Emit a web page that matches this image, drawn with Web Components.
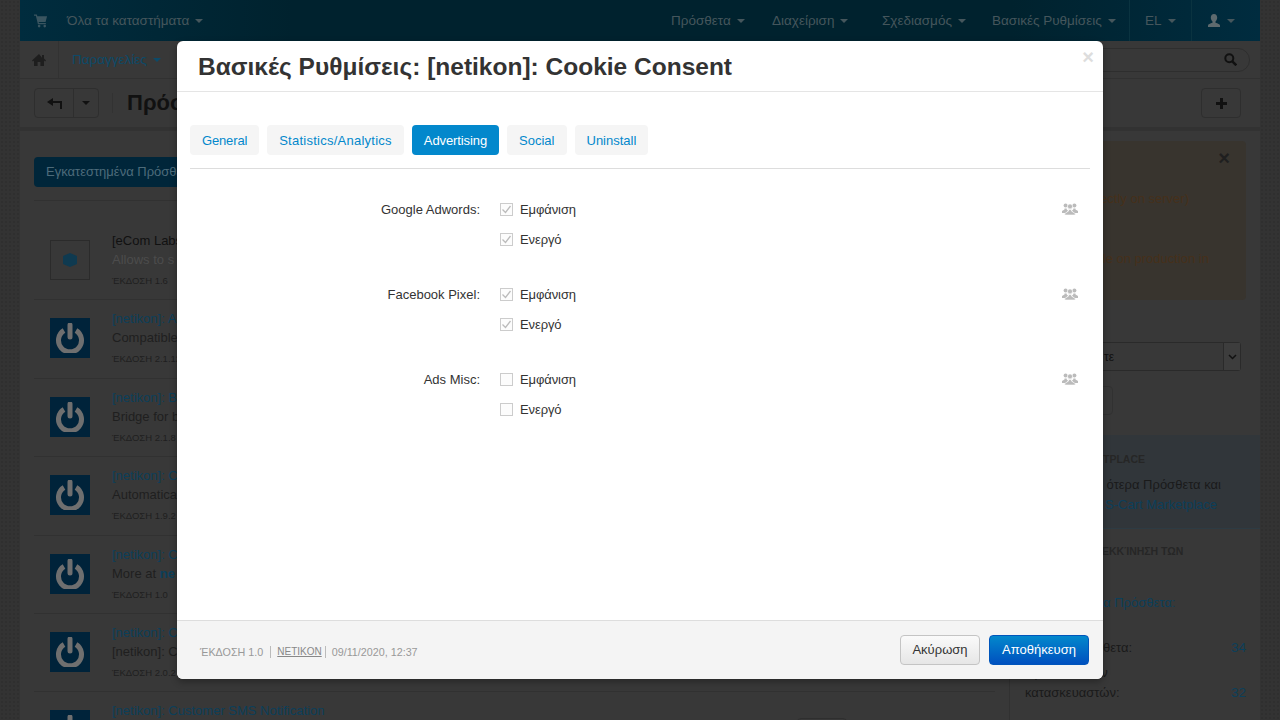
<!DOCTYPE html>
<html lang="el">
<head>
<meta charset="utf-8">
<title>Πρόσθετα</title>
<style>
  html, body { margin: 0; height: 720px; overflow: hidden; }
  body {
    font: 13px/18px "Liberation Sans", Arial, sans-serif;
    color: #1c1c1c;
    background-color: #333;
    background-image: radial-gradient(#2f2f2f 1px, transparent 1px);
    background-size: 4px 4px;
    position: relative;
  }
  .shell { width: 1240px; height: 720px; margin: 0 auto; background: #383838; display: flex; flex-direction: column; overflow: hidden; }
  .content { display: flex; flex: 1; min-height: 0; }
</style>
</head>
<body>
<div class="shell">
  <top-bar></top-bar>
  <sub-nav></sub-nav>
  <page-toolbar></page-toolbar>
  <div class="content">
    <addon-list>
      <addon-row title-text="[eCom Labs" kind="box" version="ΈΚΔΟΣΗ 1.6" dark>Allows to s</addon-row>
      <addon-row title-text="[netikon]: A" version="ΈΚΔΟΣΗ 2.1.12">Compatible</addon-row>
      <addon-row title-text="[netikon]: B" version="ΈΚΔΟΣΗ 2.1.8">Bridge for b</addon-row>
      <addon-row title-text="[netikon]: C" version="ΈΚΔΟΣΗ 1.9.2">Automatica</addon-row>
      <addon-row title-text="[netikon]: C" version="ΈΚΔΟΣΗ 1.0">More at <b>ne</b></addon-row>
      <addon-row title-text="[netikon]: C" version="ΈΚΔΟΣΗ 2.0.2">[netikon]: C</addon-row>
      <addon-row title-text="[netikon]: Customer SMS Notification" version="" action></addon-row>
    </addon-list>
    <side-bar></side-bar>
  </div>
</div>

<settings-modal heading="Βασικές Ρυθμίσεις: [netikon]: Cookie Consent">
  <tab-strip slot="tabs">
    <tab-pill style="letter-spacing:-.15px">General</tab-pill>
    <tab-pill style="letter-spacing:.25px">Statistics/Analytics</tab-pill>
    <tab-pill active style="letter-spacing:-.1px">Advertising</tab-pill>
    <tab-pill>Social</tab-pill>
    <tab-pill>Uninstall</tab-pill>
  </tab-strip>
  <setting-group label="Google Adwords:" checked></setting-group>
  <setting-group label="Facebook Pixel:" checked></setting-group>
  <setting-group label="Ads Misc:"></setting-group>
</settings-modal>

<template id="nav-style">
  <style>
    .item { display: flex; align-items: center; white-space: nowrap; box-sizing: border-box; }
    .caret { width: 0; height: 0; border: 4px solid transparent; border-top-color: currentColor; border-bottom: 0; margin-left: 6px; }
    svg { display: block; }
  </style>
</template>

<script>
const navStyle = document.getElementById('nav-style').innerHTML

const ICONS = {
  cart: '<path d="M0 1h3l.6 2H14l-1.6 6H5l.3 1.200h7.400v1.300H4.200L2 2.400H0z"/><circle cx="5.500" cy="13.500" r="1.400"/><circle cx="11.500" cy="13.500" r="1.400"/>',
  home: '<path d="M7 1 0 7.400l.9 1L2 7.500V13h3.600V9h2.800v4H12V7.500l1.100.9.9-1-2-1.800V2h-2v2.800z"/>',
  user: '<path d="M7 0c2 0 3.200 1.500 3.200 3.600 0 1.700-.8 3.200-1.700 4v1.200c2.200.6 4.500 1.500 4.500 2.700V13H1v-1.500c0-1.200 2.300-2.100 4.500-2.700V7.600c-.9-.8-1.700-2.300-1.700-4C3.800 1.500 5 0 7 0z"/>',
}

class TopBar extends HTMLElement {
  connectedCallback() {
    const items = [['Πρόσθετα', 101], ['Διαχείριση', 110], ['Σχεδιασμός', 110], ['Βασικές Ρυθμίσεις', 153]]
    this.attachShadow({ mode: 'open' }).innerHTML = `${navStyle}
      <style>
        :host { display: flex; align-items: center; height: 41px; flex: none; font-size: 13.500px; color: #45565c;
          background: linear-gradient(90deg, #002c3e 0, #00222e 22%, #00222e 80%, #002c3f 100%); }
        .right { margin-left: auto; display: flex; height: 100%; }
        .right .item { padding-left: 16px; }
        .right .div { padding-left: 15px; border-left: 1px solid #0a3340; }
      </style>
      <span class="item" style="margin-left:14px"><svg width="14" height="15" viewBox="0 0 15 15" fill="#3a5560">${ICONS.cart}</svg></span>
      <span class="item" style="margin-left:19px">Όλα τα καταστήματα<i class="caret"></i></span>
      <div class="right">
        ${items.map(([n, w]) => `<span class="item" style="width:${w}px">${n}<i class="caret"></i></span>`).join('')}
        <span class="item div" style="width:62px">EL<i class="caret"></i></span>
        <span class="item div" style="width:69px">
          <svg width="14" height="14" viewBox="0 0 14 14" fill="#5e6a6e">${ICONS.user}</svg><i class="caret"></i>
        </span>
      </div>`
  }
}

class SubNav extends HTMLElement {
  connectedCallback() {
    this.attachShadow({ mode: 'open' }).innerHTML = `${navStyle}
      <style>
        :host { display: flex; align-items: center; height: 38px; flex: none; box-sizing: border-box; background: #383838; border-bottom: 1px solid #313131; font-size: 13.500px; }
        .home { width: 38px; height: 100%; border-right: 1px solid #323232; display: flex; align-items: center; justify-content: center; }
        .orders { margin-left: 13px; color: #0c4a69; }
        .search { margin: 0 10px 0 auto; width: 200px; height: 24px; border: 1px solid #2e2e2e; border-radius: 12px; box-sizing: border-box;
          display: flex; align-items: center; justify-content: flex-end; padding-right: 12px; }
      </style>
      <span class="home"><svg width="14" height="14" viewBox="0 0 14 14" fill="#1e1e1e">${ICONS.home}</svg></span>
      <span class="item orders">Παραγγελίες<i class="caret"></i></span>
      <span class="search"><svg width="13" height="13" viewBox="0 0 13 13" fill="none" stroke="#111" stroke-width="2"><circle cx="5.300" cy="5.300" r="4"/><path d="m8.300 8.300 4 4" stroke-width="2.500"/></svg></span>`
  }
}

class PageToolbar extends HTMLElement {
  connectedCallback() {
    this.attachShadow({ mode: 'open' }).innerHTML = `
      <style>
        :host { display: flex; align-items: center; height: 52px; box-sizing: border-box; flex: none; padding: 0 19px 0 14px; border-bottom: 4px solid #323232; }
        .group { display: flex; height: 30px; border: 1px solid #2e2e2e; border-radius: 4px; box-sizing: border-box; }
        .group span { display: flex; align-items: center; justify-content: center; }
        .back { width: 38px; border-right: 1px solid #2e2e2e; }
        .more { width: 24px; }
        .more i { border: 4px solid transparent; border-top-color: #111; border-bottom: 0; }
        .sep { width: 1px; height: 20px; background: #323232; margin: 0 14px 0 13px; }
        h1 { font: bold 22px/30px "Liberation Sans", Arial, sans-serif; margin: 0; color: #111; white-space: nowrap; }
        .plus { margin-left: auto; width: 40px; height: 30px; border: 1px solid #2e2e2e; border-radius: 4px; box-sizing: border-box;
          display: flex; align-items: center; justify-content: center; }
      </style>
      <div class="group">
        <span class="back"><svg width="15" height="11" viewBox="0 0 15 11" fill="#111"><path d="M6 0v3h9v8h-2V5H6v3L0 4z"/></svg></span>
        <span class="more"><i></i></span>
      </div>
      <div class="sep"></div>
      <h1>Πρόσθετα</h1>
      <span class="plus"><svg width="11" height="11" viewBox="0 0 11 11" fill="#111"><path d="M4 0h3v4h4v3H7v4H4V7H0V4h4z"/></svg></span>`
  }
}

class AddonList extends HTMLElement {
  connectedCallback() {
    this.attachShadow({ mode: 'open' }).innerHTML = `
      <style>
        :host { display: block; width: 961px; flex: none; padding: 26px 14px 0; overflow: hidden; }
        .tab { display: inline-flex; align-items: center; height: 30px; padding: 0 12px; border-radius: 4px; background: #00263a; color: #4d6b7a; white-space: nowrap; }
        .line { border-bottom: 1px solid #313131; height: 13px; margin-bottom: 21px; }
      </style>
      <span class="tab">Εγκατεστημένα Πρόσθετα</span>
      <div class="line"></div>
      <slot></slot>`
  }
}

class AddonRow extends HTMLElement {
  connectedCallback() {
    const isBox = this.getAttribute('kind') === 'box'
    const icon = isBox
      ? `<div class="thumb box"><svg width="16" height="16" viewBox="0 0 16 16" fill="#0f3a50"><path d="M8 1l7 3v8l-7 3-7-3V4z"/></svg></div>`
      : `<div class="thumb"><svg width="30" height="30" viewBox="0 0 30 30" fill="none" stroke="#6f6f6f" stroke-width="5"><path d="M9 7.500a11.500 11.500 0 1 0 12 0"/><path d="M15 2v12" stroke-linecap="round"/></svg></div>`
    const version = this.getAttribute('version')
    this.attachShadow({ mode: 'open' }).innerHTML = `
      <style>
        :host { display: flex; height: 78.400px; box-sizing: border-box; border-bottom: 1px solid #313131; padding: 9px 0 0 16px; gap: 22px; position: relative; white-space: nowrap; }
        .thumb { width: 40px; height: 40px; margin-top: 9px; background: #00233a; display: flex; align-items: center; justify-content: center; flex: none; }
        .box { background: none; border: 1px solid #2b2b2b; box-sizing: border-box; }
        .title { color: ${this.hasAttribute('dark') ? '#111' : '#0c3f5a'}; line-height: 19px; }
        .desc { color: ${this.hasAttribute('dark') ? '#4c4c4c' : '#1f1f1f'}; line-height: 20px; }
        ::slotted(b) { color: #0c3f5a; }
        .ver { font-size: 9.500px; color: #1f1f1f; line-height: 20px; margin-top: 1px; }
        .act { position: absolute; right: 148px; top: 26px; width: 50px; height: 30px; border: 1px solid #2e2e2e; border-radius: 4px; box-sizing: border-box; }
      </style>
      ${icon}
      <div>
        <div class="title">${this.getAttribute('title-text')}</div>
        <div class="desc"><slot></slot></div>
        ${version ? `<div class="ver">${version}</div>` : ''}
      </div>
      ${this.hasAttribute('action') ? '<span class="act"></span>' : ''}`
  }
}

// what the modal does not cover: only the right-hand ends of the lines stay visible
class SideBar extends HTMLElement {
  connectedCallback() {
    this.attachShadow({ mode: 'open' }).innerHTML = `
      <style>
        :host { display: block; flex: 1; border-left: 1px solid #313131; white-space: nowrap; color: #1a1a1a; min-width: 0; }
        .notice { margin: 10px 14px 0 5px; height: 159px; background: #38342e; border-radius: 4px; color: #46301a; padding-top: 48px; box-sizing: border-box; position: relative; line-height: 20px; text-align: right; }
        .notice .x { position: absolute; right: 16px; top: 7px; font: bold 20px/20px "Liberation Sans", sans-serif; color: #1f1f1f; }
        .notice p { margin: 0 0 40px; }
        .pick { margin: 42px 19px 0 16px; height: 29px; border: 1px solid #2a2a2a; border-radius: 3px; box-sizing: border-box; display: flex; align-items: center; justify-content: space-between; font-size: 12px; color: #111; padding-left: 77px; }
        .pick span { width: 16px; height: 100%; border-left: 1px solid #2a2a2a; background: #3d3d3d; display: flex; align-items: center; justify-content: center; }
        .btn { width: 103px; height: 29px; margin-top: 15px; border: 1px solid #313131; border-radius: 4px; box-sizing: border-box; }
        .market { margin-top: 20px; height: 94px; background: #31363a; padding: 15px 0 0; box-sizing: border-box; border-bottom: 1px solid #2d3b43; line-height: 20px; text-align: right; }
        h4 { font: bold 10.500px/18px "Liberation Sans", sans-serif; margin: 0; color: #262626; }
        .market h4 { margin-bottom: 7px; }
        a { color: #0c3f5a; }
        .stats { padding: 13px 14px 0 15px; line-height: 20px; }
        .stats .link { margin-top: 33px; color: #0c3f5a; }
        .row { display: flex; justify-content: space-between; align-items: flex-end; }
        .row b { font-weight: normal; color: #0c3f5a; font-size: 13.500px; }
      </style>
      <div class="notice"><span class="x">×</span><p style="padding-right:57px">ectly on server)</p><p style="padding-right:37px">le on production in</p></div>
      <div class="pick">τε<span><svg width="9" height="6" viewBox="0 0 9 6" fill="none" stroke="#111" stroke-width="1.500"><path d="m1 1 3.500 3.500L8 1"/></svg></span></div>
      <div class="btn"></div>
      <div class="market">
        <h4 style="padding-right:115px">TPLACE</h4>
        <div style="padding-right:39px">ότερα Πρόσθετα και</div>
        <a style="display:block;padding-right:43px">S-Cart Marketplace</a>
      </div>
      <div class="stats">
        <h4 style="padding-left:77px">ΕΚΚΊΝΗΣΗ ΤΩΝ</h4>
        <div class="link" style="padding-left:78px">α Πρόσθετα:</div>
        <div class="row" style="margin-top:25px"><span style="padding-left:78px">θετα:</span><b>34</b></div>
        <div class="row" style="margin-top:5px"><span>Πρόσθετα των<br>κατασκευαστών:</span><b>32</b></div>
      </div>`
  }
}

class SettingsModal extends HTMLElement {
  connectedCallback() {
    this.attachShadow({ mode: 'open' }).innerHTML = `
      <style>
        :host { position: absolute; left: 177px; top: 41px; width: 926px; height: 638px; background: #fff; border-radius: 6px;
          display: flex; flex-direction: column; overflow: hidden; color: #333; box-shadow: 0 3px 7px rgba(0,0,0,.3); }
        header { height: 50px; flex: none; box-sizing: content-box; border-bottom: 1px solid #e5e5e5; padding-left: 21px; display: flex; align-items: center; }
        h2 { margin: 0; padding-top: 2px; font: bold 24.500px/30px "Liberation Sans", Arial, sans-serif; color: #333; }
        .close { position: absolute; right: 9px; top: 7px; font: bold 20px/18px "Liberation Sans", sans-serif; color: #ddd; }
        main { flex: 1; padding: 33px 13px 0; }
        .fields { display: flex; flex-direction: column; gap: 25px; margin-top: 25px; }
        footer { height: 59px; flex: none; box-sizing: border-box; border-top: 1px solid #ddd; background: #f4f4f4; display: flex; align-items: center; padding: 0 14px 0 23px; }
        .meta { display: flex; align-items: center; font-size: 10.750px; color: #999; padding-top: 3px; line-height: 12px; }
        .meta .v { padding-right: 7px; border-right: 1px solid #bbb; }
        .meta u { font-size: 10px; color: #888; margin: 0 3px 0 6px; }
        .meta .d { border-left: 1px solid #bbb; padding-left: 6px; }
        .acts { margin-left: auto; display: flex; gap: 9px; }
      </style>
      <header><h2>${this.getAttribute('heading')}</h2></header>
      <span class="close">×</span>
      <main>
        <slot name="tabs"></slot>
        <div class="fields"><slot></slot></div>
      </main>
      <footer>
        <div class="meta"><span class="v">ΈΚΔΟΣΗ 1.0</span><u>NETIKON</u><span class="d">09/11/2020, 12:37</span></div>
        <div class="acts"><action-button>Ακύρωση</action-button><action-button primary>Αποθήκευση</action-button></div>
      </footer>`
  }
}

class TabStrip extends HTMLElement {
  connectedCallback() {
    this.attachShadow({ mode: 'open' }).innerHTML = `
      <style>:host { display: flex; gap: 8px; padding-bottom: 13px; border-bottom: 1px solid #ddd; }</style>
      <slot></slot>`
  }
}

class TabPill extends HTMLElement {
  connectedCallback() {
    const on = this.hasAttribute('active')
    this.attachShadow({ mode: 'open' }).innerHTML = `
      <style>
        :host { display: flex; align-items: center; height: 30px; box-sizing: border-box; padding: 2px 12px 0; border-radius: 4px; font-size: 13px;
          background: ${on ? '#0388cc' : '#f5f5f5'}; color: ${on ? '#fff' : '#0388cc'}; }
      </style>
      <slot></slot>`
  }
}

class SettingGroup extends HTMLElement {
  connectedCallback() {
    const c = this.hasAttribute('checked') ? 'checked' : ''
    this.attachShadow({ mode: 'open' }).innerHTML = `
      <style>
        :host { display: grid; grid-template-columns: 290px 1fr auto; column-gap: 20px; grid-auto-rows: 30px; align-items: center; padding-right: 12px; }
        .label { text-align: right; padding-top: 2px; }
        svg { grid-column: 3; grid-row: 1; display: block; }
      </style>
      <span class="label">${this.getAttribute('label')}</span>
      <check-box ${c} style="grid-column:2;grid-row:1">Εμφάνιση</check-box>
      <svg width="16" height="12" viewBox="0 0 16 12" fill="#bbb">
        <circle cx="3.600" cy="2.400" r="2"/><circle cx="12.400" cy="2.400" r="2"/>
        <path d="M0 9.500V8l2.500-1.500V5.500h2.200v1L6 7.500 4 10H0zM16 9.500V8l-2.500-1.500V5.500h-2.200v1L10 7.500l2 2.500h4z"/>
        <circle cx="8" cy="3.400" r="2.500" stroke="#fff" stroke-width=".6"/>
        <path d="M2.800 12V10.500L6.600 8V6.500h2.800V8l3.800 2.500V12z" stroke="#fff" stroke-width=".6"/>
      </svg>
      <check-box ${c} style="grid-column:2;grid-row:2">Ενεργό</check-box>`
  }
}

class CheckBox extends HTMLElement {
  connectedCallback() {
    const tick = this.hasAttribute('checked') ? '<path d="m2.500 6.500 3 3 5-6.500" fill="none" stroke="#bbb" stroke-width="1.300"/>' : ''
    this.attachShadow({ mode: 'open' }).innerHTML = `
      <style>
        :host { display: flex; align-items: center; gap: 7px; }
        svg { display: block; flex: none; }
        span { padding-top: 2px; letter-spacing: -.1px; }
      </style>
      <svg width="13" height="13" viewBox="0 0 13 13"><rect x=".5" y=".5" width="12" height="12" fill="#fcfcfc" stroke="#ccc"/>${tick}</svg>
      <span><slot></slot></span>`
  }
}

class ActionButton extends HTMLElement {
  connectedCallback() {
    const p = this.hasAttribute('primary')
    this.attachShadow({ mode: 'open' }).innerHTML = `
      <style>
        :host { display: flex; align-items: center; justify-content: center; height: 30px; box-sizing: border-box; border-radius: 4px;
          width: ${p ? 100 : 80}px; border: 1px solid ${p ? '#0055bb' : '#c4c4c4'}; color: ${p ? '#fff' : '#333'}; font-size: 13px;
          background: linear-gradient(${p ? '#0388cc, #0050bf' : '#fafafa, #e6e6e6'}); }
      </style>
      <slot></slot>`
  }
}

customElements.define('top-bar', TopBar)
customElements.define('sub-nav', SubNav)
customElements.define('page-toolbar', PageToolbar)
customElements.define('addon-list', AddonList)
customElements.define('addon-row', AddonRow)
customElements.define('side-bar', SideBar)
customElements.define('settings-modal', SettingsModal)
customElements.define('tab-strip', TabStrip)
customElements.define('tab-pill', TabPill)
customElements.define('setting-group', SettingGroup)
customElements.define('check-box', CheckBox)
customElements.define('action-button', ActionButton)
</script>
</body>
</html>
